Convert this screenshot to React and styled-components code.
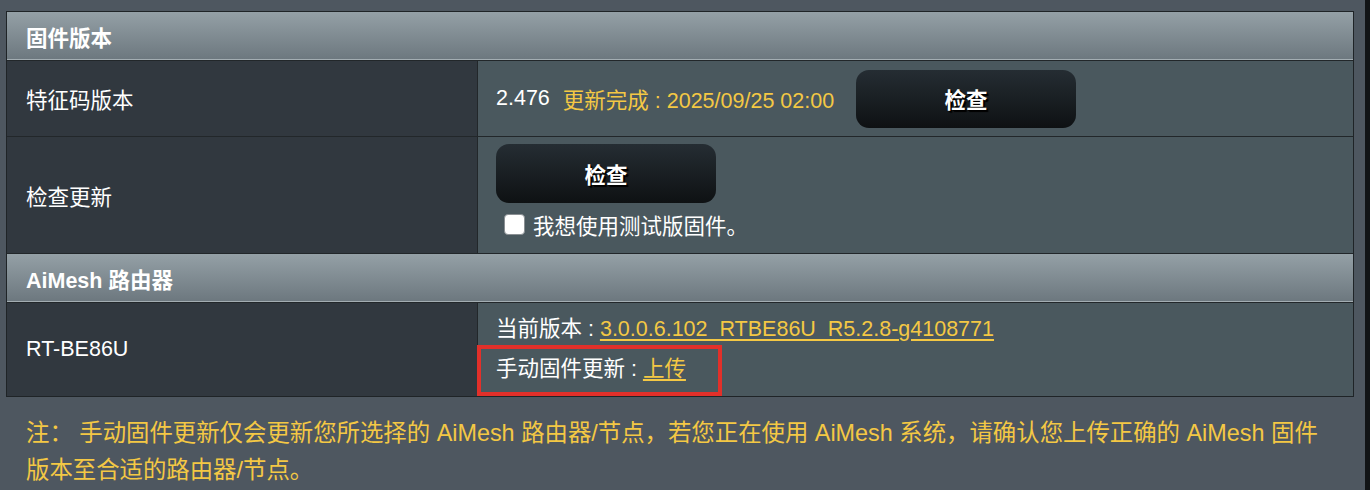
import React from "react";
import styled, { createGlobalStyle } from "styled-components";

const GlobalStyle = createGlobalStyle`
  html, body {
    margin: 0;
    padding: 0;
    background: #4e5760;
  }
  body {
    font-family: "Liberation Sans", "Noto Sans CJK SC", sans-serif;
    color: #ffffff;
  }
`;

const yellow = "#f4c844";

const Page = styled.div`
  box-sizing: border-box;
  width: 1370px;
  height: 490px;
  padding: 11px 0 0 6px;
  border-right: 5px solid #111416;
  overflow: hidden;
`;

const Panel = styled.div`
  width: 1348px;
  box-sizing: border-box;
  border: 1px solid #1f2427;
`;

const SectionHeader = styled.div`
  height: 49px;
  box-sizing: border-box;
  display: flex;
  align-items: center;
  padding-left: 19px;
  background: linear-gradient(#94a0a6, #6c777e);
  box-shadow: inset 0 -1px 0 #a3adb2;
  border-bottom: 1px solid #22272a;
  font-size: 21.5px;
  font-weight: bold;
  color: #ffffff;
`;

const Row = styled.div`
  display: grid;
  grid-template-columns: 471px 1fr;
  height: ${(p) => p.$h}px;
  border-bottom: ${(p) => (p.$last ? "none" : "1px solid #22272a")};
`;

const Label = styled.div`
  background: #31383f;
  border-right: 1px solid #22272a;
  display: flex;
  align-items: center;
  padding-left: 19px;
  font-size: 21.5px;
`;

const Value = styled.div`
  background: #4a585e;
  padding-left: 18px;
  display: flex;
  flex-direction: ${(p) => (p.$column ? "column" : "row")};
  align-items: ${(p) => (p.$column ? "flex-start" : "center")};
  padding-top: ${(p) => p.$pt || 0}px;
  box-sizing: border-box;
  font-size: 21.5px;
`;

const Yellow = styled.span`
  color: ${yellow};
  margin-left: ${(p) => p.$ml || 0}px;
`;

const Button = styled.button`
  width: 220px;
  height: ${(p) => p.$h || 58}px;
  margin-left: ${(p) => p.$ml || 0}px;
  border: none;
  border-radius: 13px;
  background: linear-gradient(#252d33, #0e1113);
  color: #ffffff;
  font-family: "Liberation Sans", "Noto Sans CJK SC", sans-serif;
  font-size: 21.5px;
  font-weight: bold;
  text-shadow: 1px 1px 0 #000000, 2px 2px 1px #000000;
  cursor: pointer;
`;

const CheckLine = styled.label`
  display: flex;
  align-items: center;
  gap: 8px;
  margin: 6px 0 0 8px;
  font-size: 21.5px;
`;

const Box = styled.input`
  appearance: none;
  width: 21px;
  height: 21px;
  margin: 0;
  border: 1px solid #8a8f93;
  border-radius: 4px;
  background: #ffffff;
`;

const InfoLine = styled.div`
  position: relative;
  font-size: 21.5px;
  line-height: 26px;
  margin-top: ${(p) => p.$mt || 0}px;
  white-space: nowrap;
`;

const Link = styled.a`
  color: ${yellow};
  text-decoration: underline;
  text-underline-offset: 3px;
`;

const Highlight = styled.span`
  position: absolute;
  left: -19px;
  top: -11px;
  width: 245px;
  height: 51px;
  box-sizing: border-box;
  border: 4px solid #e2302a;
  pointer-events: none;
`;

const Note = styled.p`
  margin: 18px 0 0 20px;
  font-size: 23.4px;
  line-height: 37px;
  color: ${yellow};
  width: 1300px;
`;

export default function App() {
  return (
    <Page>
      <GlobalStyle />
      <Panel>
        <SectionHeader>固件版本</SectionHeader>
        <Row $h={75}>
          <Label>特征码版本</Label>
          <Value>
            <span>2.476</span>
            <Yellow $ml={13}>更新完成 : 2025/09/25 02:00</Yellow>
            <Button $ml={22}>检查</Button>
          </Value>
        </Row>
        <Row $h={116}>
          <Label>检查更新</Label>
          <Value $column $pt={7}>
            <Button $h={59}>检查</Button>
            <CheckLine>
              <Box type="checkbox" />
              我想使用测试版固件。
            </CheckLine>
          </Value>
        </Row>
        <SectionHeader>AiMesh 路由器</SectionHeader>
        <Row $h={93} $last>
          <Label>RT-BE86U</Label>
          <Value $column $pt={13}>
            <InfoLine>
              当前版本 : <Link href="#">3.0.0.6.102_RTBE86U_R5.2.8-g4108771</Link>
            </InfoLine>
            <InfoLine $mt={14}>
              手动固件更新 : <Link href="#">上传</Link>
              <Highlight />
            </InfoLine>
          </Value>
        </Row>
      </Panel>
      <Note>
        注：&nbsp;手动固件更新仅会更新您所选择的 AiMesh 路由器/节点，若您正在使用 AiMesh 系统，请确认您上传正确的 AiMesh 固件版本至合适的路由器/节点。
      </Note>
    </Page>
  );
}
